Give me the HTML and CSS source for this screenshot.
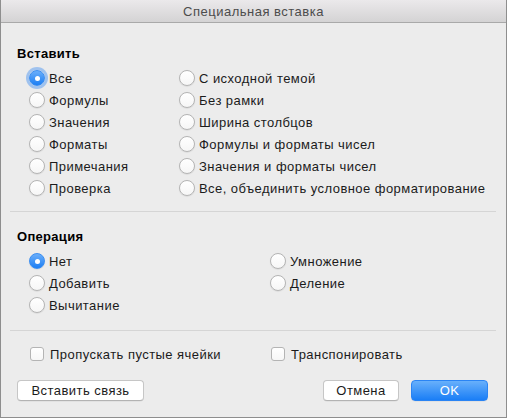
FILE: index.html
```html
<!DOCTYPE html>
<html lang="ru">
  <head>
    <meta charset="UTF-8">
    <title>Специальная вставка</title>
    <link rel="stylesheet" href="styles.css">
  </head>
  <body>
    <div class="window">
      <div class="titlebar">Специальная вставка</div>

      <div class="content">
        <div class="section paste">
          <h2>Вставить</h2>
          <div class="options paste-grid">
            <label class="opt"><input type="radio" name="paste" class="focus" checked>Все</label>
            <label class="opt"><input type="radio" name="paste">С исходной темой</label>
            <label class="opt"><input type="radio" name="paste">Формулы</label>
            <label class="opt"><input type="radio" name="paste">Без рамки</label>
            <label class="opt"><input type="radio" name="paste">Значения</label>
            <label class="opt"><input type="radio" name="paste">Ширина столбцов</label>
            <label class="opt"><input type="radio" name="paste">Форматы</label>
            <label class="opt"><input type="radio" name="paste">Формулы и форматы чисел</label>
            <label class="opt"><input type="radio" name="paste">Примечания</label>
            <label class="opt"><input type="radio" name="paste">Значения и форматы чисел</label>
            <label class="opt"><input type="radio" name="paste">Проверка</label>
            <label class="opt"><input type="radio" name="paste">Все, объединить условное форматирование</label>
          </div>
        </div>

        <hr class="sep">

        <div class="section operation">
          <h2>Операция</h2>
          <div class="options op-grid">
            <label class="opt"><input type="radio" name="op" checked>Нет</label>
            <label class="opt"><input type="radio" name="op">Умножение</label>
            <label class="opt"><input type="radio" name="op">Добавить</label>
            <label class="opt"><input type="radio" name="op">Деление</label>
            <label class="opt"><input type="radio" name="op">Вычитание</label>
          </div>
        </div>

        <hr class="sep sep-low">

        <div class="checks op-grid">
          <label class="opt"><input type="checkbox">Пропускать пустые ячейки</label>
          <label class="opt"><input type="checkbox">Транспонировать</label>
        </div>

        <div class="buttons">
          <button class="btn link-btn">Вставить связь</button>
          <div class="right">
            <button class="btn cancel">Отмена</button>
            <button class="btn ok">OK</button>
          </div>
        </div>
      </div>
    </div>
  </body>
</html>
```

FILE: styles.css
```css
* {
  box-sizing: border-box;
}

body {
  margin: 0;
  font-family: 'Liberation Sans', Arial, sans-serif;
  font-size: 13px;
  letter-spacing: 0.45px;
  color: #1b1b1b;
  background: #ececec;
}

.window {
  width: 507px;
  height: 418px;
  border: 1px solid #8e8e8e;
  border-top: none;
  background: #ececec;
  display: flex;
  flex-direction: column;
}

.titlebar {
  height: 23px;
  line-height: 23px;
  text-align: center;
  color: #4c4c4c;
  letter-spacing: 0.5px;
  background: linear-gradient(#ebe9eb, #d4d3d4);
  border-bottom: 1px solid #a9a9a9;
}

.content {
  padding: 23px 0 0 16px;
  display: flex;
  flex-direction: column;
}

h2 {
  margin: 0 0 5px;
  font-size: 13px;
  line-height: 16px;
  font-weight: bold;
  letter-spacing: 0.3px;
  color: #000;
}

.options {
  padding-left: 12px;
}

.paste-grid {
  display: grid;
  grid-template-columns: 150px auto;
  grid-auto-rows: 22px;
}

.op-grid {
  display: grid;
  grid-template-columns: 241px auto;
  grid-auto-rows: 22px;
  padding-left: 12px;
}

.opt {
  display: flex;
  align-items: center;
  gap: 4px;
  white-space: nowrap;
}

/* radio buttons */
input[type="radio"] {
  appearance: none;
  -webkit-appearance: none;
  margin: 0;
  width: 16px;
  height: 16px;
  border-radius: 50%;
  border: 1px solid #b4b4b4;
  background: linear-gradient(#ffffff, #f6f6f6);
  box-shadow: 0 0.5px 1px rgba(0, 0, 0, 0.12);
  flex: none;
  position: relative;
}

input[type="radio"]:checked {
  border-color: #3a8ef2;
  background: linear-gradient(#6aaefa, #1d7ff4);
}

input[type="radio"]:checked::after {
  content: '';
  position: absolute;
  left: 4.5px;
  top: 4.5px;
  width: 5px;
  height: 5px;
  border-radius: 50%;
  background: #fff;
}

input[type="radio"].focus {
  box-shadow: 0 0 0 3px rgba(96, 160, 240, 0.55);
}

/* checkboxes */
input[type="checkbox"] {
  appearance: none;
  -webkit-appearance: none;
  margin: 0 2px 0 1px;
  width: 14px;
  height: 14px;
  border-radius: 3px;
  border: 1px solid #b4b4b4;
  background: linear-gradient(#ffffff, #f7f7f7);
  flex: none;
}

.sep {
  margin: 12px 0 0 -7px;
  width: 486px;
  border: none;
  border-top: 1px solid #d5d5d5;
}

.operation {
  margin-top: 17px;
}

.sep-low {
  margin-top: 14px;
}

.checks {
  margin-top: 12px;
}

.buttons {
  margin-top: 15px;
  display: flex;
  justify-content: space-between;
  width: 471px;
}

.right {
  display: flex;
  gap: 12px;
}

.btn {
  font-family: inherit;
  font-size: 13px;
  letter-spacing: 0.45px;
  height: 21px;
  padding: 0;
  border-radius: 4px;
  border: 1px solid #c6c6c6;
  border-bottom-color: #b3b3b3;
  background: #fff;
  color: #1b1b1b;
  box-shadow: 0 0.5px 0.5px rgba(0, 0, 0, 0.08);
}

.link-btn {
  width: 127px;
}

.cancel {
  width: 76px;
}

.ok {
  width: 77px;
  color: #fff;
  border-color: #2a84f4;
  background: linear-gradient(#68b0fb, #1a7ef6);
}
```
